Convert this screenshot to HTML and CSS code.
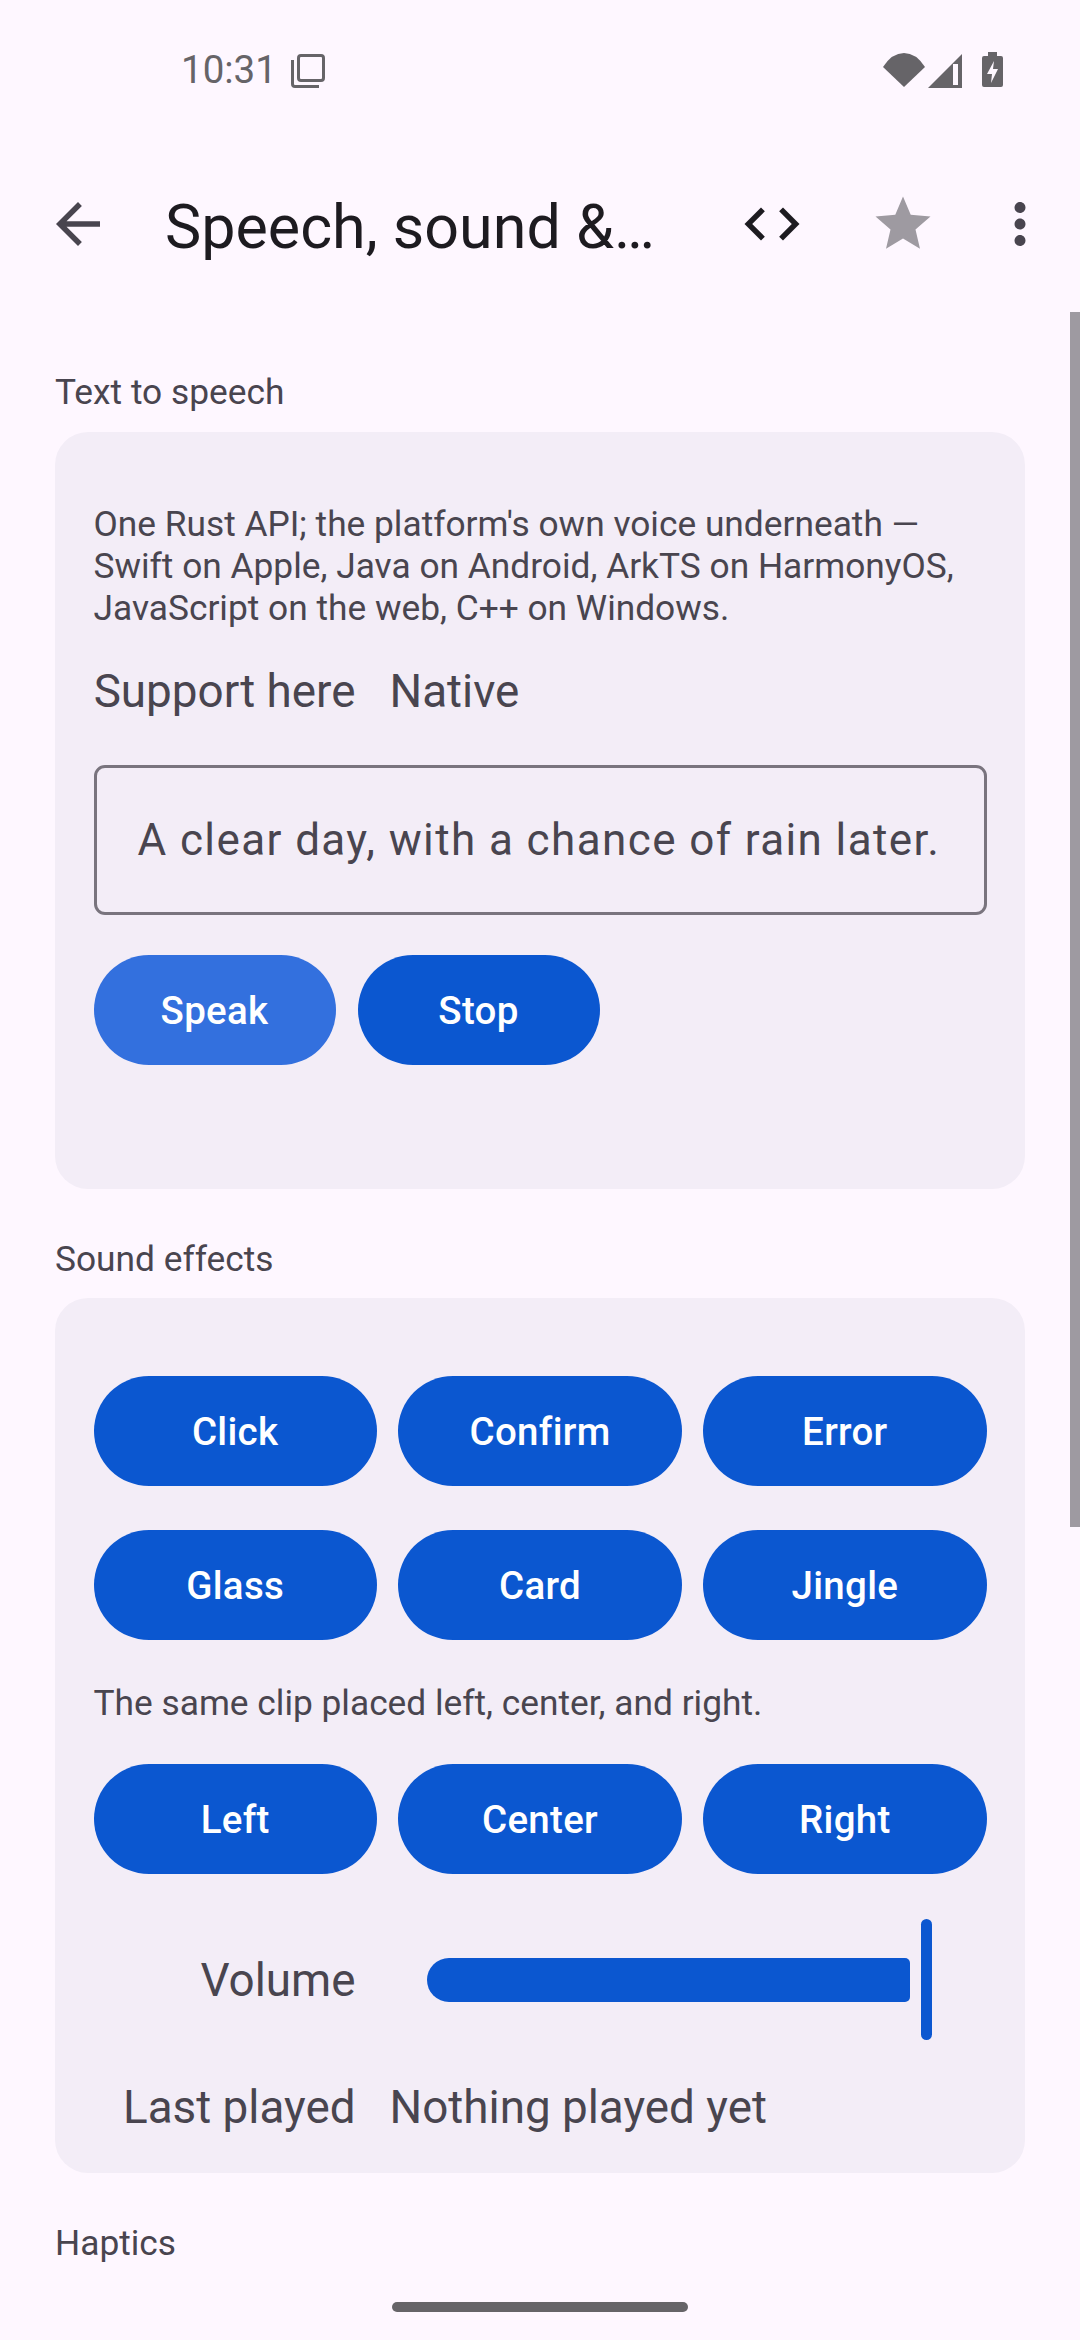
FILE: index.html
```html
<!DOCTYPE html>
<html lang="en">
<head>
<meta charset="utf-8">
<title>Speech, sound &amp; haptics</title>
<link rel="stylesheet" href="styles.css">
</head>
<body>
<div class="screen">
  <header class="status-bar">
    <span class="clock">10:31</span>
    <svg class="ic-copy" width="34" height="34" viewBox="0 0 34 34" fill="none" stroke="#666468" stroke-width="3">
      <rect x="7.5" y="1.5" width="25" height="25" rx="2.5"/>
      <path d="M1.5 6v24a2.5 2.5 0 0 0 2.500 2.500H28"/>
    </svg>
    <span class="status-spacer"></span>
    <svg class="ic-wifi" width="42" height="34" viewBox="0 0 42 34"><path fill="#666468" d="M0 14Q9 0 21 0t21 14L21 34z"/></svg>
    <svg class="ic-signal" width="34" height="34" viewBox="0 0 34 34"><path fill="#666468" fill-rule="evenodd" d="M34 0v34H0zM25 10v21h5V10z"/></svg>
    <svg class="ic-battery" width="21" height="35" viewBox="0 0 21 35"><path fill="#666468" fill-rule="evenodd" d="M6 0h9v4h4a2 2 0 0 1 2 2v27a2 2 0 0 1-2 2H2a2 2 0 0 1-2-2V6a2 2 0 0 1 2-2h4zM12 9l-7 13h5l-1 9 7-14h-5z"/></svg>
  </header>

  <nav class="app-bar">
    <svg class="icon" viewBox="0 0 24 24"><path fill="#49454f" d="M20 11H7.830l5.590-5.590L12 4l-8 8 8 8 1.410-1.410L7.830 13H20v-2z"/></svg>
    <h1 class="title">Speech, sound &amp;…</h1>
    <svg class="icon" viewBox="0 0 24 24"><path fill="#1d1b20" d="M9.400 16.600L4.800 12l4.600-4.600L8 6l-6 6 6 6 1.400-1.400zm5.200 0l4.600-4.600-4.600-4.600L16 6l6 6-6 6-1.400-1.400z"/></svg>
    <svg class="icon icon-star" viewBox="0 0 24 24"><path fill="#9e9aa1" d="M12 17.270L18.180 21l-1.640-7.030L22 9.240l-7.190-.61L12 2 9.190 8.630 2 9.240l5.460 4.730L5.820 21z"/></svg>
    <svg class="icon icon-more" viewBox="0 0 24 24"><path fill="#49454f" d="M12 8c1.100 0 2-.9 2-2s-.9-2-2-2-2 .9-2 2 .9 2 2 2zm0 2c-1.100 0-2 .9-2 2s.9 2 2 2 2-.9 2-2-.9-2-2-2zm0 6c-1.100 0-2 .9-2 2s.9 2 2 2 2-.9 2-2-.9-2-2-2z"/></svg>
  </nav>

  <main class="content">
    <h2 class="section-label">Text to speech</h2>
    <section class="card card-speech">
      <p class="note">One Rust API; the platform's own voice underneath — Swift on Apple, Java on Android, ArkTS on HarmonyOS, JavaScript on the web, C++ on Windows.</p>
      <div class="kv kv-support"><span class="kv-key">Support here</span><span class="kv-value">Native</span></div>
      <div class="field">A clear day, with a chance of rain later.</div>
      <div class="btn-row btn-row-speech">
        <button class="btn btn-pressed">Speak</button>
        <button class="btn">Stop</button>
      </div>
    </section>

    <h2 class="section-label section-next">Sound effects</h2>
    <section class="card card-sound">
      <div class="btn-grid">
        <button class="btn">Click</button>
        <button class="btn">Confirm</button>
        <button class="btn">Error</button>
        <button class="btn">Glass</button>
        <button class="btn">Card</button>
        <button class="btn">Jingle</button>
      </div>
      <p class="note note-clip">The same clip placed left, center, and right.</p>
      <div class="btn-grid">
        <button class="btn">Left</button>
        <button class="btn">Center</button>
        <button class="btn">Right</button>
      </div>
      <div class="volume">
        <span class="kv-key volume-label">Volume</span>
        <div class="slider">
          <div class="slider-track"></div>
          <div class="slider-thumb"></div>
        </div>
      </div>
      <div class="kv kv-last"><span class="kv-key">Last played</span><span class="kv-value">Nothing played yet</span></div>
    </section>

    <h2 class="section-label section-next">Haptics</h2>
  </main>

  <div class="scrollbar"></div>
  <div class="home-pill"></div>
</div>
</body>
</html>
```
FILE: styles.css
```css
* { box-sizing: border-box; margin: 0; padding: 0; }

html, body { width: 1080px; height: 2340px; overflow: hidden; }

body {
  background: #fef7ff;
  font-family: Roboto, "Noto Sans", sans-serif;
  color: #49454f;
}

.screen { position: relative; width: 1080px; height: 2340px; overflow: hidden; }

/* Status bar */
.status-bar {
  display: flex;
  align-items: flex-start;
  height: 132px;
  padding: 52px 77px 0 181px;
}
.clock { font-size: 38.500px; line-height: 36px; color: #666468; }
.ic-copy { margin: 2px 0 0 14px; }
.status-spacer { flex: 1; }
.ic-wifi { margin: 1px 3px 0 0; }
.ic-signal { margin: 2px 20px 0 0; }

/* Top app bar */
.app-bar {
  display: flex;
  align-items: center;
  height: 184px;
  padding: 0 27.500px 0 44.5px;
}
.icon { width: 66px; height: 66px; flex: none; }
.icon-star { margin-left: 65.5px; }
.icon-more { margin-left: 50.5px; }
.title {
  flex: 1;
  margin-left: 54.5px;
  padding-top: 5px;
  font-size: 61px;
  font-weight: 400;
  line-height: 80px;
  color: #1d1b20;
  white-space: nowrap;
}

/* Scrolling content */
.content { padding: 55px 55px 0; }
.section-label {
  font-size: 35.300px;
  font-weight: 400;
  line-height: 42px;
  margin-bottom: 19px;
}
.section-next { margin-top: 49px; margin-bottom: 18px; }

.card {
  background: #f3edf7;
  border-radius: 33px;
  padding: 0 38.500px 37px;
}
.card-speech { padding-top: 71px; padding-bottom: 124px; }
.card-sound { padding-top: 78px; }

.note { font-size: 35.300px; line-height: 42px; }
.note-clip { margin: 42px 0 40px; }

.kv { display: flex; font-size: 45.800px; line-height: 56px; }
.kv-key { width: 262px; text-align: right; flex: none; font-size: 45.800px; white-space: nowrap; }
.kv-value { margin-left: 34px; }
.kv-support { margin-top: 35px; }
.kv-last { margin-top: 40px; }
.volume-label { padding-top: 2px; }

.field {
  height: 150px;
  margin-top: 45px;
  padding-left: 41px;
  border: 3px solid #79747e;
  border-radius: 11px;
  font-size: 44px;
  line-height: 144px;
  letter-spacing: 1.4px;
  white-space: nowrap;
}

.btn-row { display: flex; gap: 22px; }
.btn-row-speech { margin-top: 40px; }
.btn-row-speech .btn { width: 242px; }

.btn-grid { display: grid; grid-template-columns: repeat(3, 1fr); gap: 44px 21.500px; }

.btn {
  height: 110px;
  border: 0;
  border-radius: 55px;
  background: #0b57d0;
  color: #fff;
  font-family: inherit;
  font-size: 38.500px;
  font-weight: 500;
  letter-spacing: 0.3px;
}
.btn-pressed { background: #3370de; }

/* Volume slider */
.volume { display: flex; align-items: center; height: 121px; margin-top: 45px; }
.slider { display: flex; align-items: center; gap: 11px; margin-left: 71px; }
.slider-track { width: 483px; height: 44px; background: #0b57d0; border-radius: 22px 5px 5px 22px; }
.slider-thumb { width: 11px; height: 121px; background: #0b57d0; border-radius: 6px; }

/* Overlays */
.scrollbar {
  position: absolute;
  top: 312px;
  right: 0;
  width: 10px;
  height: 1215px;
  background: #9e9aa1;
}
.home-pill {
  position: absolute;
  left: 392px;
  top: 2302px;
  width: 296px;
  height: 10px;
  border-radius: 5px;
  background: #666468;
}
```
